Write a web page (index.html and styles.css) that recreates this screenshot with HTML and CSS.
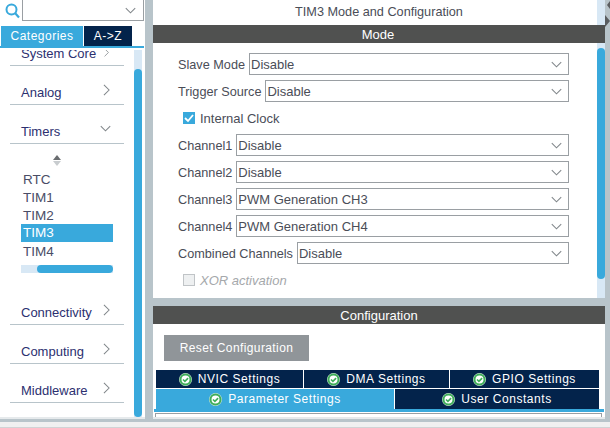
FILE: index.html
```html
<!DOCTYPE html>
<html lang="en">
<head>
    <meta charset="UTF-8">
    <title>TIM3 Mode and Configuration</title>
    <link rel="stylesheet" href="styles.css">
</head>
<body>
    <svg class="icon-defs" width="0" height="0">
        <symbol id="chev-down" viewBox="0 0 14 8"><path d="M1 1l6 6 6-6" fill="none" stroke="#80868a" stroke-width="1.3"/></symbol>
        <symbol id="chev-right" viewBox="0 0 8 14"><path d="M1 1l6 6-6 6" fill="none" stroke="#80868a" stroke-width="1.2"/></symbol>
        <symbol id="ok" viewBox="0 0 13 13"><circle cx="6.5" cy="6.5" r="6.5" fill="#d5ecd8"/><circle cx="6.5" cy="6.5" r="5" fill="#fff" stroke="#3fae5a" stroke-width="2"/><path d="M4 6.5l1.9 1.9 3.2-3.3" fill="none" stroke="#3fae5a" stroke-width="1.6"/></symbol>
    </svg>

    <div class="main">
        <aside class="sidebar">
            <div class="search">
                <svg class="search-icon" viewBox="0 0 15 16"><circle cx="6.5" cy="6.5" r="5" fill="none" stroke="#39a9dc" stroke-width="2"/><path d="M10 10l4 4.5" stroke="#39a9dc" stroke-width="2.2"/></svg>
                <div class="search-box"><svg class="chev-d"><use href="#chev-down"/></svg></div>
            </div>
            <div class="side-tabs">
                <div class="side-tab active">Categories</div>
                <div class="side-tab">A-&gt;Z</div>
            </div>
            <div class="side-body">
                <div class="side-list">
                    <div class="cat first">System Core<svg class="chev-r small"><use href="#chev-right"/></svg></div>
                    <div class="cat">Analog<svg class="chev-r"><use href="#chev-right"/></svg></div>
                    <div class="cat">Timers<svg class="chev-d open"><use href="#chev-down"/></svg></div>
                    <div class="sub">
                        <div class="sort-arrows"><span class="arrow-up"></span><span class="arrow-down"></span></div>
                        <div class="sub-item">RTC</div>
                        <div class="sub-item">TIM1</div>
                        <div class="sub-item">TIM2</div>
                        <div class="sub-item selected">TIM3</div>
                        <div class="sub-item">TIM4</div>
                        <div class="hscroll"><div class="hscroll-thumb"></div></div>
                    </div>
                    <div class="cat">Connectivity<svg class="chev-r"><use href="#chev-right"/></svg></div>
                    <div class="cat">Computing<svg class="chev-r"><use href="#chev-right"/></svg></div>
                    <div class="cat">Middleware<svg class="chev-r"><use href="#chev-right"/></svg></div>
                </div>
                <div class="vscroll side-scroll"><div class="vscroll-thumb"></div></div>
            </div>
        </aside>

        <div class="content">
            <section class="mode-panel">
                <div class="mode-inner">
                    <h1 class="title">TIM3 Mode and Configuration</h1>
                    <div class="bar">Mode</div>
                    <div class="form">
                        <div class="row"><label>Slave Mode</label><div class="select">Disable<svg class="chev-d"><use href="#chev-down"/></svg></div></div>
                        <div class="row"><label>Trigger Source</label><div class="select">Disable<svg class="chev-d"><use href="#chev-down"/></svg></div></div>
                        <div class="row check-row"><span class="check on"><svg viewBox="0 0 12 12"><path d="M2 6l3 3 5-6" fill="none" stroke="#fff" stroke-width="1.8"/></svg></span>Internal Clock</div>
                        <div class="row"><label>Channel1</label><div class="select">Disable<svg class="chev-d"><use href="#chev-down"/></svg></div></div>
                        <div class="row"><label>Channel2</label><div class="select">Disable<svg class="chev-d"><use href="#chev-down"/></svg></div></div>
                        <div class="row"><label>Channel3</label><div class="select">PWM Generation CH3<svg class="chev-d"><use href="#chev-down"/></svg></div></div>
                        <div class="row"><label>Channel4</label><div class="select">PWM Generation CH4<svg class="chev-d"><use href="#chev-down"/></svg></div></div>
                        <div class="row"><label>Combined Channels</label><div class="select">Disable<svg class="chev-d"><use href="#chev-down"/></svg></div></div>
                        <div class="row check-row disabled"><span class="check"></span>XOR activation</div>
                    </div>
                </div>
                <div class="vscroll mode-scroll"><div class="vscroll-thumb"></div></div>
            </section>

            <section class="config-panel">
                <div class="bar">Configuration</div>
                <button class="reset">Reset Configuration</button>
                <div class="tabs">
                    <div class="tab-row top">
                        <div class="tab nvic"><svg class="ok"><use href="#ok"/></svg>NVIC Settings</div>
                        <div class="tab dma"><svg class="ok"><use href="#ok"/></svg>DMA Settings</div>
                        <div class="tab gpio"><svg class="ok"><use href="#ok"/></svg>GPIO Settings</div>
                    </div>
                    <div class="tab-row bottom">
                        <div class="tab active"><svg class="ok"><use href="#ok"/></svg>Parameter Settings</div>
                        <div class="tab user"><svg class="ok"><use href="#ok"/></svg>User Constants</div>
                    </div>
                </div>
                <div class="tab-body"><div class="tab-frame"></div></div>
            </section>
        </div>

        <div class="sash">
            <svg viewBox="0 0 5 28" width="5" height="28"><path d="M2 5l3-4v8zM0 15l5 6-5 6z" fill="#5a5d60"/></svg>
        </div>
    </div>
    <div class="status"></div>
</body>
</html>
```

FILE: styles.css
```css
* {
    box-sizing: border-box;
}

body {
    margin: 0;
    width: 610px;
    height: 428px;
    overflow: hidden;
    font-family: "Liberation Sans", Arial, sans-serif;
    font-size: 13px;
    color: #4a4d57;
    background-color: #f0f0f0;
}

.icon-defs {
    display: block;
}

.main {
    display: flex;
    height: 422px;
    background-color: #b8c4ca;
}

/* left column */
.sidebar {
    display: flex;
    flex-direction: column;
    width: 145px;
    height: 419px;
    margin-right: 8px;
    background-color: #fff;
    border-bottom: 2px solid #e6eaec;
}

.search {
    display: flex;
    align-items: flex-start;
    height: 26px;
    padding-left: 5px;
}

.search-icon {
    width: 15px;
    height: 16px;
    margin-top: 3px;
    margin-right: 2px;
}

.search-box {
    display: flex;
    justify-content: flex-end;
    align-items: center;
    width: 122px;
    height: 21px;
    padding-right: 7px;
    border: 1px solid #9a9fa3;
    border-top: none;
}

.chev-d {
    width: 11px;
    height: 7px;
}

.chev-r {
    width: 7px;
    height: 12px;
    margin-top: -6px;
}

.side-tabs {
    display: flex;
    gap: 1px;
    height: 22px;
    padding-left: 1px;
    width: 144px;
    border-bottom: 2px solid #39a9dc;
}

.side-tab {
    width: 48px;
    height: 20px;
    line-height: 20px;
    text-align: center;
    font-size: 12px;
    letter-spacing: 0.5px;
    color: #fff;
    background-color: #03234b;
}

.side-tab.active {
    width: 82px;
    background-color: #39a9dc;
}

.side-body {
    display: flex;
    flex: 1;
    min-height: 0;
    padding-top: 2px;
}

.side-list {
    flex: 1;
    height: 100%;
    overflow: hidden;
    padding-left: 10px;
    padding-right: 10px;
}

.cat {
    display: flex;
    justify-content: space-between;
    align-items: center;
    height: 39px;
    padding: 15px 14px 0 11px;
    border-bottom: 1px solid #b8c4ca;
    color: #2c3070;
}

.cat.first {
    height: 16px;
    padding-top: 0;
    align-items: flex-end;
    padding-bottom: 4px;
}

.cat .chev-d {
    margin-top: -6px;
    margin-right: -1px;
}

.chev-r.small {
    height: 9px;
    margin-top: 0;
    margin-bottom: 4px;
}

.sub {
    height: 142px;
    padding-top: 11px;
}

.sort-arrows {
    display: flex;
    flex-direction: column;
    align-items: center;
    gap: 1px;
    width: 94px;
    height: 11px;
    margin-bottom: 4px;
}

.arrow-up,
.arrow-down {
    width: 0;
    height: 0;
    border-left: 4px solid transparent;
    border-right: 4px solid transparent;
}

.arrow-up {
    border-bottom: 5px solid #6a6d70;
}

.arrow-down {
    border-top: 5px solid #c8cccf;
}

.sub-item {
    width: 92px;
    height: 18px;
    line-height: 20px;
    margin-left: 11px;
    padding-left: 2px;
    font-size: 13.5px;
    color: #4a4d66;
}

.sub-item.selected {
    line-height: 18px;
    color: #fff;
    background-color: #39a9dc;
}

.hscroll {
    width: 92px;
    height: 8px;
    margin-left: 11px;
    margin-top: 5px;
    padding-left: 16px;
    background-color: #d8e8f5;
}

.hscroll-thumb {
    height: 8px;
    border-radius: 4px;
    background-color: #39a9dc;
}

.vscroll {
    flex: none;
    width: 8px;
    background-color: #d8e8f5;
}

.vscroll-thumb {
    height: 100%;
    border-radius: 4px;
    background-color: #39a9dc;
}

.side-scroll {
    height: 100%;
    margin-right: 3px;
    padding-top: 19px;
}

/* right column */
.content {
    display: flex;
    flex-direction: column;
    gap: 8px;
    width: 452px;
    height: 419px;
}

.sash {
    width: 5px;
}

.sash svg {
    display: block;
}

.mode-panel {
    display: flex;
    height: 298px;
    background-color: #fff;
}

.mode-inner {
    flex: 1;
}

.mode-scroll {
    height: 298px;
    padding-top: 48px;
    padding-bottom: 19px;
}

.title {
    height: 25px;
    margin: 0;
    line-height: 24px;
    text-align: center;
    font-size: 12.7px;
    font-weight: normal;
    padding-left: 8px;
}

.bar {
    height: 18px;
    line-height: 19px;
    text-align: center;
    font-size: 13px;
    color: #fff;
    background-color: #505150;
}

.mode-inner .bar {
    margin-right: -8px;
    padding-right: 2px;
    position: relative;
}

.form {
    display: flex;
    flex-direction: column;
    gap: 5px;
    padding: 10px 0 0 25px;
}

.row {
    display: flex;
    align-items: center;
    gap: 4px;
    height: 22px;
    width: 391px;
    font-size: 12.7px;
}

.row label {
    padding-top: 2px;
}

.select {
    display: flex;
    justify-content: space-between;
    align-items: center;
    flex: 1;
    height: 22px;
    padding: 0 6px 0 1px;
    border: 1px solid #9a9fa3;
    font-size: 13px;
    color: #4a4d57;
}

.check-row {
    padding-left: 5px;
    gap: 5px;
    font-size: 13px;
}

.check {
    display: block;
    width: 12px;
    height: 12px;
    background-color: #eef0f1;
    border: 1px solid #c0c4c7;
}

.check.on {
    border: none;
    background-color: #39a9dc;
}

.check svg {
    display: block;
}

.disabled {
    color: #a5a8ab;
    font-style: italic;
}

.config-panel {
    display: flex;
    flex-direction: column;
    flex: 1;
    min-height: 0;
    background-color: #fff;
    border-bottom: 2px solid #e6eaec;
}

.reset {
    align-self: flex-start;
    flex: none;
    width: 145px;
    height: 26px;
    margin: 11px 0 9px 11px;
    padding: 0;
    border: none;
    font-family: inherit;
    font-size: 12px;
    letter-spacing: 0.4px;
    color: #fff;
    background-color: #909599;
}

.tabs {
    flex: none;
    width: 443px;
    margin-left: 3px;
}

.tab-row {
    display: flex;
    gap: 1px;
}

.tab-row.top {
    height: 18px;
    margin-bottom: 1px;
}

.tab-row.bottom {
    height: 20px;
}

.tab {
    display: flex;
    justify-content: center;
    align-items: center;
    gap: 6px;
    font-size: 12px;
    letter-spacing: 0.55px;
    color: #fff;
    background-color: #03234b;
}

.tab.nvic {
    width: 147px;
}

.tab.dma {
    width: 145px;
}

.tab.gpio {
    width: 149px;
}

.tab.active {
    width: 238px;
    background-color: #39a9dc;
}

.tab.user {
    width: 204px;
}

.ok {
    width: 13px;
    height: 13px;
}

.tab-body {
    flex: 1;
    min-height: 0;
    width: 450px;
    margin-left: 1px;
    padding: 1px 2px 0 1px;
    border-top: 3px solid #39a9dc;
}

.tab-frame {
    height: 100%;
    border: 1px solid #9a9fa3;
    border-bottom: none;
}

.status {
    height: 6px;
    border-bottom: 1px solid #d0d3d5;
}
```
